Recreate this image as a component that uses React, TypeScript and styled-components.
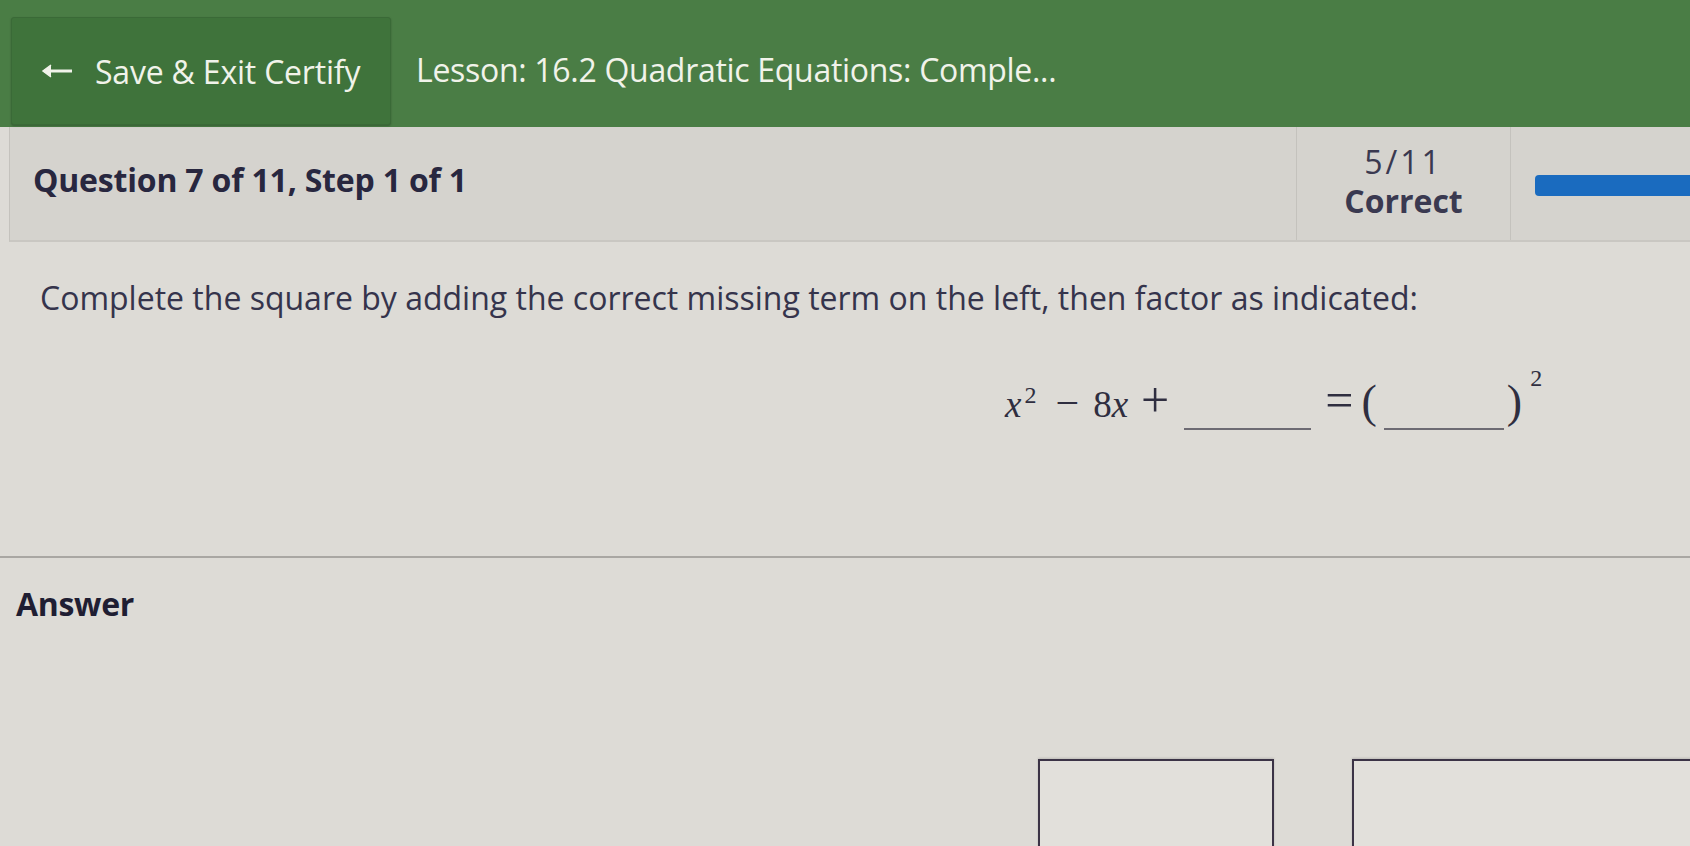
import React from 'react';
import styled, { createGlobalStyle } from 'styled-components';

const GlobalStyle = createGlobalStyle`
  html, body {
    margin: 0;
    padding: 0;
    background: #dddbd6;
    font-family: 'Open Sans', 'Liberation Sans', sans-serif;
    color: #2c2b44;
    overflow: hidden;
  }
  #root {
    height: 846px;
    overflow: hidden;
  }
`;

const Header = styled.div`
  display: flex;
  align-items: flex-start;
  height: 127px;
  padding: 17px 0 0 11px;
  box-sizing: border-box;
  background-color: #4a7d45;
`;
const ExitButton = styled.button`
  display: flex;
  align-items: center;
  gap: 22px;
  width: 380px;
  height: 108px;
  padding: 0 0 0 29px;
  box-sizing: border-box;
  background-color: #3f733b;
  border: 1px solid #3a6a37;
  border-radius: 3px;
  box-shadow: 0 1px 2px rgba(0, 0, 0, 0.25);
  font-family: 'Open Sans', 'Liberation Sans', sans-serif;
  font-size: 32px;
  letter-spacing: -0.2px;
  color: #f1f3ea;
  cursor: pointer;
`;
const LessonTitle = styled.div`
  align-self: stretch;
  display: flex;
  align-items: center;
  padding: 0 0 6px 25px;
  font-size: 32px;
  letter-spacing: -0.3px;
  color: #f1f3ea;
`;

const QuestionBar = styled.div`
  display: flex;
  height: 113px;
  margin-left: 9px;
  background-color: #d5d3ce;
  border-left: 1px solid #c4c2bd;
  border-bottom: 2px solid #c9c7c2;
`;
const QuestionTitle = styled.div`
  flex: 1;
  display: flex;
  align-items: center;
  padding: 0 0 8px 23px;
  font-size: 32px;
  font-weight: 700;
  letter-spacing: -0.2px;
  color: #28273f;
`;
const ScoreCell = styled.div`
  display: flex;
  flex-direction: column;
  align-items: center;
  justify-content: center;
  width: 215px;
  padding-bottom: 6px;
  box-sizing: border-box;
  border-left: 1px solid #c4c2bd;
  border-right: 1px solid #c4c2bd;
  font-size: 32px;
  line-height: 39px;
  color: #3a3950;
`;
const ScoreValue = styled.div`
  letter-spacing: 3px;
`;
const ScoreLabel = styled.div`
  font-weight: 700;
`;
const ProgressCell = styled.div`
  display: flex;
  align-items: center;
  width: 179px;
  padding: 4px 0 0 24px;
  box-sizing: border-box;
`;
const ProgressBar = styled.div`
  flex: 1;
  height: 21px;
  background-color: #1a6bbf;
  border-radius: 4px 0 0 4px;
`;

const Content = styled.div`
  padding: 34px 0 0 40px;
  height: 316px;
  box-sizing: border-box;
  border-bottom: 2px solid #a9a7a3;
`;
const Prompt = styled.div`
  font-size: 32px;
  color: #35344c;
`;
const Equation = styled.div`
  display: flex;
  align-items: baseline;
  margin: 52px 0 0 965px;
  font-family: 'Liberation Serif', 'DejaVu Serif', serif;
  font-size: 37px;
  color: #2f2e40;
`;
const Var = styled.span`
  font-style: italic;
`;
const Sup = styled.sup<{ raise: number; gap: number }>`
  position: relative;
  top: ${(p) => -p.raise}px;
  font-size: 24px;
  vertical-align: baseline;
  margin-left: ${(p) => p.gap}px;
`;
const Op = styled.span<{ left: number; right: number; size?: number }>`
  margin: 0 ${(p) => p.right}px 0 ${(p) => p.left}px;
  font-size: ${(p) => p.size ?? 42}px;
`;
const Paren = styled.span<{ left: number }>`
  margin-left: ${(p) => p.left}px;
  font-size: 46px;
`;
const Blank = styled.span<{ w: number; left: number }>`
  display: inline-block;
  width: ${(p) => p.w}px;
  margin-left: ${(p) => p.left}px;
  border-bottom: 2px solid #6d6b73;
  transform: translateY(13px);
`;

const AnswerSection = styled.div`
  display: flex;
  flex-direction: column;
  padding: 24px 0 0 16px;
`;
const AnswerLabel = styled.div`
  font-size: 32px;
  font-weight: 700;
  letter-spacing: -0.3px;
  color: #1f1e33;
`;
const BoxRow = styled.div`
  display: flex;
  justify-content: flex-end;
  gap: 78px;
  margin: 134px -10px 0 0;
`;
const InputBox = styled.div<{ w: number }>`
  width: ${(p) => p.w}px;
  height: 100px;
  box-sizing: border-box;
  background-color: #e2e0db;
  border: 2px solid #3b3346;
  box-shadow: 0 -1px 2px rgba(0, 0, 0, 0.15);
`;

function LeftArrow() {
  return (
    <svg width="32" height="16" viewBox="0 0 32 16">
      <path d="M3 8 H31" stroke="#f1f3ea" strokeWidth="3" />
      <path d="M10 2 L2 8 L10 14" fill="#f1f3ea" stroke="#f1f3ea" strokeWidth="1.5" />
    </svg>
  );
}

export default function App() {
  return (
    <>
      <GlobalStyle />
      <Header>
        <ExitButton>
          <LeftArrow />
          Save &amp; Exit Certify
        </ExitButton>
        <LessonTitle>Lesson: 16.2 Quadratic Equations: Comple...</LessonTitle>
      </Header>
      <QuestionBar>
        <QuestionTitle>Question 7 of 11, Step 1 of 1</QuestionTitle>
        <ScoreCell>
          <ScoreValue>5/11</ScoreValue>
          <ScoreLabel>Correct</ScoreLabel>
        </ScoreCell>
        <ProgressCell>
          <ProgressBar />
        </ProgressCell>
      </QuestionBar>
      <Content>
        <Prompt>
          Complete the square by adding the correct missing term on the left, then factor as indicated:
        </Prompt>
        <Equation>
          <Var>x</Var>
          <Sup raise={14} gap={3}>2</Sup>
          <Op left={19} right={14}>−</Op>
          <span>8</span>
          <Var>x</Var>
          <Op left={13} right={15} size={50}>+</Op>
          <Blank w={127} left={0} />
          <Op left={14} right={8} size={50}>=</Op>
          <Paren left={0}>(</Paren>
          <Blank w={120} left={7} />
          <Paren left={3}>)</Paren>
          <Sup raise={31} gap={8}>2</Sup>
        </Equation>
      </Content>
      <AnswerSection>
        <AnswerLabel>Answer</AnswerLabel>
        <BoxRow>
          <InputBox w={236} />
          <InputBox w={348} />
        </BoxRow>
      </AnswerSection>
    </>
  );
}
